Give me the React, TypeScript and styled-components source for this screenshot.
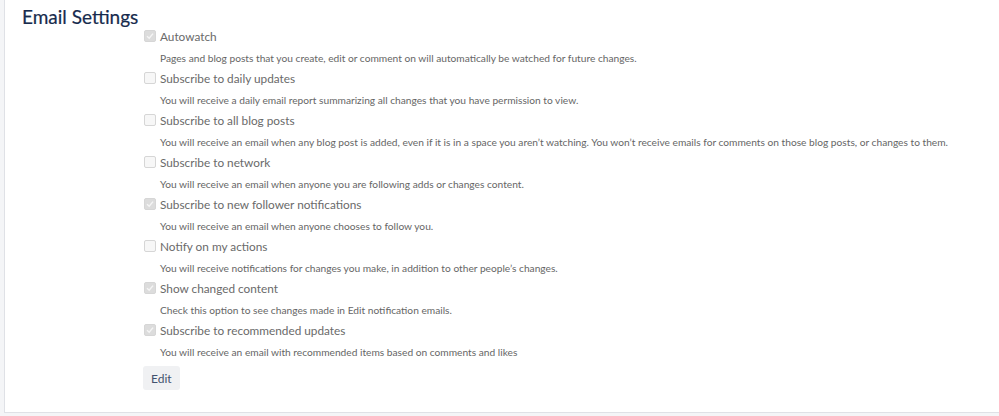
import React from 'react';
import styled, { createGlobalStyle } from 'styled-components';

const GlobalStyle = createGlobalStyle`
  html, body {
    margin: 0;
    padding: 0;
    background: #f4f5f7;
    font-family: Lato, 'Open Sans', 'Liberation Sans', sans-serif;
  }
`;

const Panel = styled.div`
  box-sizing: border-box;
  height: 413px;
  margin-left: 4px;
  background: #fff;
  border-left: 1px solid #dfe1e6;
  border-bottom: 1px solid #dfe1e6;
  padding: 6px 0 0 17px;
`;

const Title = styled.h2`
  margin: 0;
  font-size: 19px;
  font-weight: 400;
  line-height: 22px;
  color: #172b4d;
  -webkit-text-stroke: 0.2px #172b4d;
`;

const Options = styled.div`
  margin-left: 122px;
  margin-top: -2px;
  display: flex;
  flex-direction: column;
`;

const Option = styled.div`
  display: flex;
  flex-direction: column;
`;

const LabelRow = styled.label`
  display: flex;
  align-items: center;
  gap: 4px;
  height: 20px;
  font-size: 11.8px;
  color: #6a6a6a;
`;

const Box = styled.span<{ checked: boolean }>`
  box-sizing: border-box;
  width: 12px;
  height: 12px;
  border: 1px solid #d6d6d6;
  border-radius: 2px;
  background: ${({ checked }) => (checked ? '#dcdcdc' : '#f7f7f7')};
  display: flex;
  align-items: center;
  justify-content: center;
`;

const Description = styled.div`
  padding-left: 16px;
  height: 22px;
  line-height: 24px;
  font-size: 10.2px;
  color: #666;
  white-space: nowrap;
`;

const EditButton = styled.button`
  margin-top: 4px;
  align-self: flex-start;
  height: 24px;
  padding: 0 8px;
  margin-left: -1px;
  border: none;
  border-radius: 3px;
  background: #f0f1f3;
  color: #42526e;
  font-family: inherit;
  font-size: 12px;
`;

const options = [
  {
    label: 'Autowatch',
    checked: true,
    text: 'Pages and blog posts that you create, edit or comment on will automatically be watched for future changes.',
  },
  {
    label: 'Subscribe to daily updates',
    checked: false,
    text: 'You will receive a daily email report summarizing all changes that you have permission to view.',
  },
  {
    label: 'Subscribe to all blog posts',
    checked: false,
    text: 'You will receive an email when any blog post is added, even if it is in a space you aren\u2019t watching. You won\u2019t receive emails for comments on those blog posts, or changes to them.',
  },
  {
    label: 'Subscribe to network',
    checked: false,
    text: 'You will receive an email when anyone you are following adds or changes content.',
  },
  {
    label: 'Subscribe to new follower notifications',
    checked: true,
    text: 'You will receive an email when anyone chooses to follow you.',
  },
  {
    label: 'Notify on my actions',
    checked: false,
    text: 'You will receive notifications for changes you make, in addition to other people\u2019s changes.',
  },
  {
    label: 'Show changed content',
    checked: true,
    text: 'Check this option to see changes made in Edit notification emails.',
  },
  {
    label: 'Subscribe to recommended updates',
    checked: true,
    text: 'You will receive an email with recommended items based on comments and likes',
  },
];

const Check = () => (
  <svg width="8" height="8" viewBox="0 0 8 8">
    <path d="M1 4.2 L3.2 6.3 L7 1.6" fill="none" stroke="#f5f5f5" strokeWidth="1.4" />
  </svg>
);

const App: React.FC = () => (
  <>
    <GlobalStyle />
    <Panel>
      <Title>Email Settings</Title>
      <Options>
        {options.map(option => (
          <Option key={option.label}>
            <LabelRow>
              <Box checked={option.checked}>{option.checked && <Check />}</Box>
              {option.label}
            </LabelRow>
            <Description>{option.text}</Description>
          </Option>
        ))}
        <EditButton>Edit</EditButton>
      </Options>
    </Panel>
  </>
);

export default App;
